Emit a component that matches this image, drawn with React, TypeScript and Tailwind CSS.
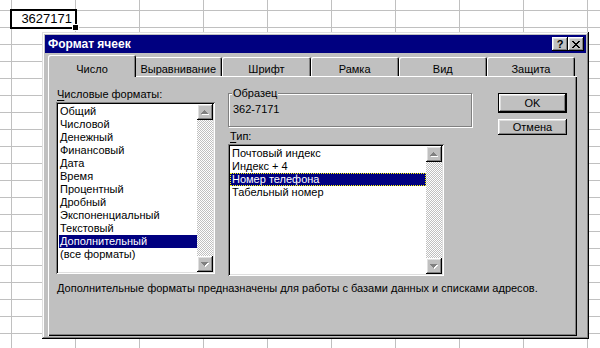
import React from 'react';

const raised =
  'shadow-[inset_-1px_-1px_#000,inset_1px_1px_#fff,inset_-2px_-2px_#808080,inset_2px_2px_#dfdfdf]';
const sunken =
  'shadow-[inset_1px_1px_#808080,inset_-1px_-1px_#fff,inset_2px_2px_#000,inset_-2px_-2px_#dfdfdf]';

const formats = [
  'Общий',
  'Числовой',
  'Денежный',
  'Финансовый',
  'Дата',
  'Время',
  'Процентный',
  'Дробный',
  'Экспоненциальный',
  'Текстовый',
  'Дополнительный',
  '(все форматы)',
];

const types = ['Почтовый индекс', 'Индекс + 4', 'Номер телефона', 'Табельный номер'];

const tabs = ['Число', 'Выравнивание', 'Шрифт', 'Рамка', 'Вид', 'Защита'];

const Arrow: React.FC<{ down?: boolean }> = ({ down = false }) => {
  const rows = down ? [9, 8, 7, 6] : [6, 7, 8, 9];
  return (
    <div className={`h-[16px] w-[16px] bg-[#c0c0c0] ${raised}`}>
      <svg width="16" height="16" viewBox="0 0 16 16" shapeRendering="crispEdges">
        {rows.map((y, i) => (
          <rect key={'w' + i} x={8 - i} y={y + 1} width={i * 2 + 1} height={1} fill="#fff" />
        ))}
        {rows.map((y, i) => (
          <rect key={'g' + i} x={7 - i} y={y} width={i * 2 + 1} height={1} fill="#808080" />
        ))}
      </svg>
    </div>
  );
};

const ScrollBar = () => (
  <div className="flex w-[16px] flex-col [background-image:repeating-conic-gradient(#c0c0c0_0_25%,#fff_0_50%)] [background-size:2px_2px]">
    <Arrow />
    <div className="flex-1" />
    <Arrow down />
  </div>
);

const TitleButton: React.FC<{ children: React.ReactNode }> = ({ children }) => (
  <div
    className={`flex h-[14px] w-[16px] items-center justify-center bg-[#c0c0c0] text-[11px] leading-none font-bold text-black ${raised}`}
  >
    {children}
  </div>
);

const App: React.FC = () => {
  return (
    <div className="relative h-[348px] w-[600px] overflow-hidden bg-white font-['Liberation_Sans',Arial,sans-serif] text-[11px] text-black [background-image:linear-gradient(to_right,#c0c0c0_1px,transparent_1px),linear-gradient(to_bottom,#c0c0c0_1px,transparent_1px)] [background-size:64px_17px] [background-position:11px_10px]">
      {/* active cell */}
      <div className="absolute top-[9px] left-[10px] h-[20px] w-[67px] border-2 border-black bg-white pr-[3px] text-right text-[13px] leading-[16px]">
        3627171
        <div className="absolute -right-[3px] -bottom-[3px] h-[5px] w-[5px] bg-black outline outline-1 outline-white" />
      </div>

      {/* dialog */}
      <div className="absolute top-[32px] left-[42px] flex h-[307px] w-[547px] flex-col bg-[#c0c0c0] p-[3px] shadow-[inset_-1px_-1px_#000,inset_1px_1px_#dfdfdf,inset_-2px_-2px_#808080,inset_2px_2px_#fff]">
        <div className="flex h-[18px] items-center justify-between bg-[#000080] pr-[2px] pl-[3px]">
          <span className="text-[12px] font-bold text-white">Формат ячеек</span>
          <div className="flex">
            <TitleButton>?</TitleButton>
            <TitleButton>
              <svg width="8" height="7" viewBox="0 0 8 7" shapeRendering="crispEdges">
                <path d="M0 0h2v1h1v1h2V1h1V0h2v1H7v1H6v1H5v1h1v1h1v1h1v1H6V6H5V5H3v1H2v1H0V6h1V5h1V4h1V3H2V2H1V1H0z" fill="#000" />
              </svg>
            </TitleButton>
          </div>
        </div>

        <div className="flex flex-1 flex-col pt-[2px] pr-[9px] pl-[3px]">
          {/* tabs */}
          <div className="flex h-[21px] px-[2px]">
            {tabs.map((t, i) =>
              i === 0 ? (
                <div
                  key={t}
                  className="relative z-10 -mx-[2px] h-[22px] flex-1 rounded-t-[2px] bg-[#c0c0c0] pt-[8px] text-center leading-[13px] shadow-[inset_1px_1px_#fff,inset_-1px_0_#000,inset_-2px_0_#808080]"
                >
                  {t}
                </div>
              ) : (
                <div
                  key={t}
                  className="mt-[2px] h-[19px] flex-1 rounded-t-[2px] pt-[6px] text-center leading-[13px] shadow-[inset_1px_1px_#fff,inset_-1px_0_#000,inset_-2px_0_#808080]"
                >
                  {t}
                </div>
              ),
            )}
          </div>

          {/* panel */}
          <div className="flex flex-1 flex-col pt-[12px] pr-[10px] pl-[8px] shadow-[inset_1px_1px_#fff,inset_-1px_-1px_#000,inset_-2px_-2px_#808080]">
            <div className="flex">
              <div className="flex w-[159px] flex-col">
                <div className="h-[13px] pl-[1px] leading-[13px]">
                  <span className="underline underline-offset-[2px]">Ч</span>исловые форматы:
                </div>
                <div className={`mt-[1px] flex h-[172px] bg-white p-[2px] ${sunken}`}>
                  <div className="flex-1 pt-[1px] pl-[1px]">
                    {formats.map((f) => (
                      <div
                        key={f}
                        className={`h-[13px] pl-[1px] leading-[13px] whitespace-nowrap ${
                          f === 'Дополнительный' ? 'bg-[#000080] text-white' : ''
                        }`}
                      >
                        {f}
                      </div>
                    ))}
                  </div>
                  <ScrollBar />
                </div>
              </div>

              <div className="ml-[13px] flex w-[244px] flex-col pt-[5px]">
                <div className="relative h-[34px] border border-[#808080] pt-[9px] pl-[4px] leading-[13px] shadow-[1px_1px_#fff,inset_1px_1px_#fff]">
                  <span className="absolute -top-[7px] left-[3px] bg-[#c0c0c0] px-[1px] leading-[13px]">
                    Образец
                  </span>
                  362-7171
                </div>
                <div className="mt-[3px] h-[13px] pl-[2px] leading-[13px]">
                  <span className="underline underline-offset-[2px]">Т</span>ип:
                </div>
                <div className={`mt-[1px] flex h-[132px] w-[216px] bg-white p-[2px] ${sunken}`}>
                  <div className="flex-1 pt-[1px]">
                    {types.map((t) => (
                      <div
                        key={t}
                        className={`h-[13px] pl-[2px] leading-[13px] whitespace-nowrap ${
                          t === 'Номер телефона'
                            ? 'bg-[#000080] text-white outline-1 -outline-offset-1 outline-[#ffff00] outline-dotted'
                            : ''
                        }`}
                      >
                        {t}
                      </div>
                    ))}
                  </div>
                  <ScrollBar />
                </div>
              </div>

              <div className="ml-[26px] flex w-[69px] flex-col pt-[5px]">
                <div className="h-[20px] border border-black">
                  <div className={`flex h-full items-center justify-center ${raised}`}>OK</div>
                </div>
                <div className={`mt-[6px] flex h-[16px] items-center justify-center ${raised}`}>Отмена</div>
              </div>
            </div>

            <div className="mt-[6px] h-[13px] pl-[1px] leading-[13px] whitespace-nowrap">
              Дополнительные форматы предназначены для работы с базами данных и списками адресов.
            </div>
          </div>
        </div>
      </div>
    </div>
  );
};

export default App;
